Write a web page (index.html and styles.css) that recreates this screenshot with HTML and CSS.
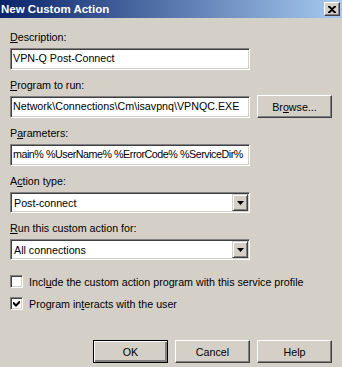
FILE: index.html
```html
<!DOCTYPE html>
<html lang="en">
<head>
  <meta charset="UTF-8" />
  <title>New Custom Action</title>
  <link rel="stylesheet" href="styles.css">
</head>
<body>
  <div class="window">
    <div class="titlebar">
      <span class="title">New Custom Action</span>
      <span class="close-btn">
        <svg width="8" height="7" viewBox="0 0 8 7"><path d="M0 0h2l2 2 2-2h2v1L5 3.5 8 6v1H6L4 5 2 7H0V6l3-2.5L0 1z" fill="#000"/></svg>
      </span>
    </div>

    <div class="content">
      <div class="field">
        <div class="label"><u>D</u>escription:</div>
        <div class="textbox">VPN-Q Post-Connect</div>
      </div>

      <div class="field">
        <div class="label"><u>P</u>rogram to run:</div>
        <div class="row">
          <div class="textbox">Network\Connections\Cm\isavpnq\VPNQC.EXE</div>
          <div class="button browse">Br<u>o</u>wse...</div>
        </div>
      </div>

      <div class="field">
        <div class="label">P<u>a</u>rameters:</div>
        <div class="textbox tight">main% %UserName% %ErrorCode% %ServiceDir%</div>
      </div>

      <div class="field">
        <div class="label">A<u>c</u>tion type:</div>
        <div class="combo">
          <span class="combo-text">Post-connect</span>
          <span class="combo-btn"><svg width="7" height="4" viewBox="0 0 7 4"><path d="M0 0h7L3.5 4z" fill="#000"/></svg></span>
        </div>
      </div>

      <div class="field">
        <div class="label"><u>R</u>un this custom action for:</div>
        <div class="combo">
          <span class="combo-text">All connections</span>
          <span class="combo-btn"><svg width="7" height="4" viewBox="0 0 7 4"><path d="M0 0h7L3.5 4z" fill="#000"/></svg></span>
        </div>
      </div>

      <div class="checks">
        <div class="check-row">
          <span class="checkbox"></span>
          <span>Incl<u>u</u>de the custom action program with this service profile</span>
        </div>
        <div class="check-row">
          <span class="checkbox">
            <svg width="7" height="7" viewBox="0 0 7 7"><path d="M0 2h1l2 2 3-3 1 0v2L3 7 0 4z" fill="#000"/></svg>
          </span>
          <span>Program in<u>t</u>eracts with the user</span>
        </div>
      </div>
    </div>

    <div class="buttons">
      <div class="button default">OK</div>
      <div class="button">Cancel</div>
      <div class="button">Help</div>
    </div>
  </div>
</body>
</html>
```

FILE: styles.css
```css
* {
  box-sizing: border-box;
  margin: 0;
  padding: 0;
}

body {
  background-color: #d4d0c8;
  font-family: 'Liberation Sans', Arial, sans-serif;
  font-size: 10.7px;
  color: #000;
}

u {
  text-decoration: underline;
  text-underline-offset: 1px;
}

.window {
  width: 342px;
  height: 367px;
  background-color: #d4d0c8;
  display: flex;
  flex-direction: column;
}

.titlebar {
  height: 18px;
  display: flex;
  align-items: center;
  justify-content: space-between;
  padding: 0 2px 0 1px;
  background: linear-gradient(to right, #0a246a, #a6caf0);
}

.title {
  color: #fff;
  font-weight: bold;
  font-size: 11.5px;
}

.close-btn {
  width: 16px;
  height: 14px;
  display: flex;
  align-items: center;
  justify-content: center;
  background-color: #d4d0c8;
  border: 1px solid;
  border-color: #fff #404040 #404040 #fff;
  box-shadow: inset -1px -1px #808080;
}

.content {
  padding: 13px 10px 0 10px;
}

.field {
  margin-bottom: 9px;
}

.label {
  height: 13px;
  line-height: 13px;
  margin-bottom: 4px;
}

.row {
  display: flex;
  gap: 7px;
}

.textbox {
  width: 240px;
  height: 22px;
  line-height: 18px;
  padding: 0 2px;
  background-color: #fff;
  white-space: nowrap;
  overflow: hidden;
  border: 1px solid;
  border-color: #808080 #fff #fff #808080;
  box-shadow: inset 1px 1px #404040, inset -1px -1px #d4d0c8;
}

.textbox.tight {
  letter-spacing: -0.45px;
}

.combo {
  width: 240px;
  height: 21px;
  display: flex;
  align-items: center;
  justify-content: space-between;
  padding: 1px 1px 1px 3px;
  background-color: #fff;
  border: 1px solid;
  border-color: #808080 #fff #fff #808080;
  box-shadow: inset 1px 1px #404040, inset -1px -1px #d4d0c8;
}

.combo-btn {
  width: 16px;
  height: 17px;
  display: flex;
  align-items: center;
  justify-content: center;
  background-color: #d4d0c8;
  border: 1px solid;
  border-color: #d4d0c8 #404040 #404040 #d4d0c8;
  box-shadow: inset 1px 1px #fff, inset -1px -1px #808080;
}

.checks {
  margin-top: 15px;
  display: flex;
  flex-direction: column;
  gap: 9px;
}

.check-row {
  display: flex;
  align-items: center;
  gap: 6px;
}

.checkbox {
  width: 13px;
  height: 13px;
  display: flex;
  align-items: center;
  justify-content: center;
  background-color: #fff;
  border: 1px solid;
  border-color: #808080 #fff #fff #808080;
  box-shadow: inset 1px 1px #404040, inset -1px -1px #d4d0c8;
}

.buttons {
  margin-top: auto;
  margin-bottom: 4px;
  padding-right: 10px;
  display: flex;
  justify-content: flex-end;
  gap: 7px;
}

.button {
  width: 75px;
  height: 23px;
  display: flex;
  align-items: center;
  justify-content: center;
  background-color: #d4d0c8;
  border: 1px solid;
  border-color: #fff #404040 #404040 #fff;
  box-shadow: inset -1px -1px #808080;
}

.button.browse {
  margin-top: -1px;
}

.button.default {
  border-color: #000;
  box-shadow: inset 1px 1px #fff, inset -2px -2px #808080;
}
```
